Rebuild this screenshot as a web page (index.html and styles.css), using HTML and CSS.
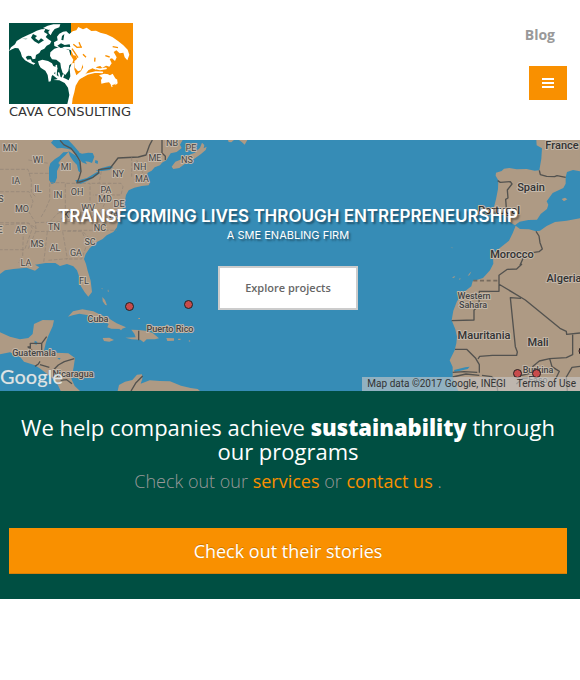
FILE: index.html
```html
<!DOCTYPE html>
<html lang="en">
<head>
<meta charset="utf-8">
<meta name="viewport" content="width=device-width, initial-scale=1">
<title>Cava Consulting</title>
<link rel="stylesheet" href="styles.css">
</head>
<body>
<header class="header">
  <a class="brand" href="#">
    <svg class="brand-mark" viewBox="27 24 372 243" preserveAspectRatio="none" aria-hidden="true">
      <path fill="#004f42" d="M27 24h186v243H27z"/>
      <path fill="#f99000" d="M213 24h186v243H213z"/>
      <g fill="#fff">
        <path d="M27 108L33 97 45 88 50 78 66 68 82 61 97 54 110 47 124 43 136 42 132 51 143 58 137 66 145 73 154 79 150 87 140 92 133 101 123 106 118 114 108 120 106 131 98 133 93 123 84 122 77 126 82 134 92 133 96 141 106 145 101 149 88 143 75 136 66 125 62 112 55 100 45 99 36 103z"/>
        <path d="M129 39L143 32 160 28 181 28 178 37 164 42 157 51 152 61 146 55 144 44z"/>
        <path d="M114 139L127 134 144 138 156 145 160 153 173 158 171 168 162 174 155 184 152 199 146 200 143 180 136 167 122 158 117 149z"/>
        <path d="M163 93L162 82 173 76 171 65 178 56 189 50 199 49 208 57 218 49 229 46 235 36 249 43 260 38 274 48 288 47 301 53 319 58 338 67 355 79 370 91 383 104 388 119 382 136 374 127 370 113 359 115 349 106 341 111 350 127 345 138 336 130 329 132 335 145 328 155 315 151 306 158 298 148 291 151 286 165 276 153 267 148 258 164 251 160 245 143 233 136 228 122 220 121 213 106 202 102 194 106 186 96 176 98z"/>
        <path d="M151 112L163 101 180 96 193 101 207 104 211 119 220 134 217 144 208 151 205 168 196 180 188 174 183 158 181 144 169 134 156 133 150 123z"/>
        <path d="M223 139L237 127 247 132 249 145 243 166 234 169 225 158zM292 146L310 143 320 151 308 158zM297 181L313 176 326 178 320 185 306 188zM303 195L310 184 322 178 330 181 338 176 344 187 350 195 345 208 334 211 327 202 316 203 304 206zM332 209L339 213 335 217zM347 196L351 191 353 205 346 211z"/>
        <path d="M202 267L208 240 204 218 194 204 178 196 160 195 173 192 157 179 146 165 151 162 165 178 178 185 194 190 206 196 211 184 209 160 216 145 224 144 223 163 229 181 243 168 252 153 262 145 276 149 299 143 319 139 322 145 300 153 281 158 265 166 252 183 237 195 227 212 223 232 218 250 216 267z"/>
      </g>
      <g fill="none" stroke="#fff" stroke-width="5" stroke-linecap="round" stroke-linejoin="round">
        <path d="M244 187L262 177 287 171 307 172M281 159L300 163 318 160M186 192L190 180M168 180L169 152M180 189L176 174M256 155L272 132 291 120"/>
      </g>
      <path fill="#004f42" d="M99 57L111 63 105 69 116 77 123 70 132 76 116 86 103 79 93 68zM139 45L150 44 144 50zM172 92L183 85 194 90 209 88 211 96 194 95 182 99zM186 63L193 57 190 76 184 75zM66 71L83 71 78 73z"/>
      <path fill="none" stroke="#f99000" stroke-width="4" d="M216 101L227 117 234 128M220 88L231 97 246 96M237 82L242 94M249 118L258 127M316 122L329 126M284 140L285 128M338 95L354 98"/>
    </svg>
    <span class="brand-name">CAVA CONSULTING</span>
  </a>
  <nav class="nav">
    <a class="nav-link" href="#">Blog</a>
    <button class="menu" type="button" aria-label="Menu">
      <svg width="12" height="10" viewBox="0 0 12 10" aria-hidden="true"><path fill="#fff" d="M0 0h12v2H0zM0 4h12v2H0zM0 8h12v2H0z"/></svg>
    </button>
  </nav>
</header>

<main>
  <section class="hero">
    <svg class="map" viewBox="0 0 580 251" preserveAspectRatio="xMidYMid slice" role="img" aria-label="Map of project locations">
      <!-- Land and borders are drawn on a grid of three units per map pixel -->
      <g transform="scale(.33333)">
        <g fill="#ae9a84">
          <path d="M0 0H548L540 14 545 24 530 36 512 40 499 61 486 68 480 76 464 82 455 92 443 98 439 112 442 123 450 127 446 136 425 138 403 143 386 151 378 165 374 187 367 209 359 225 350 219 349 235 354 246 351 262 340 276 320 286 308 297 285 309 269 325 257 342 252 357 258 372 263 392 272 422 276 456 265 470 254 457 242 437 240 417 231 391 220 379 201 372 180 378 166 369 137 369 105 374 118 382 105 392 80 383 40 387 15 391 0 402z"/>
          <path d="M515 80L526 65 545 58 572 43 585 38 600 23 606 8 613 15 611 25 620 20 617 30 603 42 582 57 557 70 538 84 520 87zM556 21L575 23 588 29 575 34 559 28zM684 0H702L694 7 686 6zM717 0H742L734 14 726 7z"/>
          <path d="M0 577L30 590 60 598 85 594 98 582 102 552 128 540 162 541 158 559 145 587 138 607 131 635 165 638 205 640 225 654 221 681 214 716 224 738 240 753H182L174 736 154 712 121 686 105 676 72 665 60 650 30 637 0 643z"/>
          <path d="M204 530L219 514 247 508 280 514 303 525 328 536 350 550 378 562 365 567 334 566 322 562 326 552 303 538 265 526 238 521 218 526zM308 594L328 593 342 600 328 605 312 603zM394 569L416 570 436 572 457 578 477 595 465 598 440 598 431 607 421 599 395 598 376 593 407 592 403 581zM499 594L522 595 522 602 502 603z"/>
          <path d="M307 471L315 480 321 496 316 495 308 484zM324 448L327 456 323 454zM303 445L309 446 307 448zM358 567L367 568 363 571zM415 534h5v3h-5zM535 596L542 596 541 600 534 600zM566 602L570 601 571 604 567 605z"/>
          <path d="M353 753L357 735 375 725 397 720 411 704 426 703 427 716 422 731 449 721 480 723 510 724 543 737 572 744 593 747 600 753z"/>
          <path d="M1740 0H1609L1610 16 1626 25 1624 56 1618 91 1604 92 1580 87 1550 88 1528 84 1512 86 1505 93 1488 98 1487 107 1495 121 1494 147 1488 178 1481 205 1483 217 1503 215 1520 225 1525 244 1545 256 1559 245 1585 240 1611 239 1622 222 1641 207 1645 194 1640 184 1658 159 1690 144 1697 131 1697 112 1701 96 1719 90 1740 94z"/>
          <path d="M1547 257L1560 267 1587 268 1608 274 1620 272 1640 258 1665 246 1700 242 1740 235V753H1375L1366 731 1358 712 1358 681 1349 661 1364 631 1369 610 1371 590 1366 568 1355 541 1360 512 1371 484 1391 457 1414 439 1418 424 1449 414 1470 391 1480 371 1479 349 1489 332 1510 316 1527 302 1538 280zM1685 177L1695 173 1702 178 1692 184zM1356 412L1366 408 1362 414zM1376 417L1382 415 1380 419zM1410 398L1414 395 1408 406 1403 407zM1351 322L1358 323 1358 325zM1479 654L1483 656 1481 659z"/>
        </g>
        <g fill="#368cb6">
          <path d="M153 8L160 0H205L222 18 238 37 232 45 218 31 201 26 186 24 171 25 162 17zM147 83L151 70 164 58 178 49 190 37 205 36 196 46 184 57 175 69 180 75 171 93 171 113 165 128 155 132 147 120zM205 33L224 45 237 59 243 76 242 99 235 93 231 75 219 62 210 49zM225 33L246 41 265 38 278 39 283 50 276 69 266 65 256 64 261 73 246 67 238 56 227 49zM286 60L294 63 293 72 285 68zM226 120L239 120 261 114 295 94 300 100 274 117 242 132 231 131zM287 93L305 84 330 77 339 81 329 90 305 93z"/>
          <path d="M104 602L112 606 110 614 103 612zM172 654H182L178 659zM213 706L222 717 219 722zM1362 690L1396 682 1409 680 1403 687 1364 696zM341 219L346 232 340 239 338 225zM328 205L334 229 328 233 324 217z"/>
        </g>
        <g fill="none" stroke="#53524f" stroke-width="4" stroke-linejoin="round">
          <path d="M180 1L191 14 213 25 229 45 240 63 243 94 237 114 231 129 253 122 279 112 296 98 296 89 331 84 354 54 415 51 438 45 448 17 457 0M486 0V39L496 49 496 60M91 632V610H125V640M91 620L84 621 102 636M125 610L140 590M120 664L115 672 105 679M120 674L148 682M160 690L175 675 193 665 223 656M182 721L200 719 216 731M416 572V601M428 708L408 728 393 753"/>
          <path d="M1618 91L1621 104 1640 109 1664 110 1671 107 1697 112M1493 122L1501 127 1531 125 1536 132 1522 150 1524 174 1517 178 1519 204M1608 274L1617 288 1620 308 1627 327 1617 335 1583 340 1570 353 1560 376M1566 372L1550 387 1522 388 1497 406V454H1438L1437 496 1422 511 1422 540 1355 542M1496 432L1576 480 1680 565 1699 574 1700 583 1740 579M1563 475L1531 473 1546 620 1552 636 1550 646 1477 646 1439 649 1434 657M1365 628L1400 628 1427 655 1438 674 1438 698M1718 584L1718 644 1699 653 1649 656 1618 663 1599 679 1590 700 1562 707M1358 697L1392 695 1432 697M1358 711L1398 702 1438 706M1446 706L1475 710 1490 726 1493 753M1649 656L1656 680 1678 694 1668 715M1740 679L1716 682 1699 711 1702 753M1549 732L1569 715 1604 713 1639 723"/>
        </g>
        <path fill="none" stroke="#776b5e" stroke-width="5" stroke-dasharray="12 8" d="M1420 422H1497"/>
        <g fill="none" stroke="#918477" stroke-width="2" stroke-dasharray="11 5">
          <path d="M0 88H84L94 122V157L108 171M0 155H87L99 184 93 205M0 248H80L110 265M87 100H146M149 130V179L136 209 121 235M0 255L87 249 97 265 74 329H0M78 200L94 228 107 248 107 275 85 326M151 128H196V208L171 222 151 244M199 130H270V186L250 216 213 221 179 239M275 130H363L369 140 363 165H279M304 94L297 130M395 52V110M410 60L432 106M402 118H440M106 248L215 244 325 239M107 275L242 271H350M142 275L131 368M188 275L202 356 143 361M202 274H246L261 312 245 357H199M250 276L285 313M284 192L316 187 324 173M320 176L307 206 273 234M70 273L68 348 56 368M85 60L145 70"/>
        </g>
      </g>
      <g class="label label-state">
        <text x="10" y="11">MN</text><text x="38" y="23">WI</text><text x="66" y="30">MI</text><text x="118" y="37">NY</text>
        <text x="155" y="21">ME</text><text x="140" y="30">NH</text><text x="142" y="42">MA</text><text x="172" y="6">NB</text>
        <text x="191" y="11">PE</text><text x="187" y="23">NS</text><text x="16" y="44">IA</text><text x="38" y="52">IL</text>
        <text x="58" y="58">IN</text><text x="77" y="55">OH</text><text x="106" y="53">PA</text><text x="105" y="62">MD</text>
        <text x="119" y="67">DE</text><text x="88" y="71">WV</text><text x="69" y="78">KY</text><text x="113" y="78">VA</text><text x="22" y="72">MO</text><text x="1" y="62">S</text>
        <text x="0" y="93">E</text><text x="21" y="93">AR</text><text x="54" y="90">TN</text><text x="100" y="91">NC</text><text x="90" y="105">SC</text>
        <text x="37" y="107">MS</text><text x="55" y="111">AL</text><text x="76" y="116">GA</text><text x="26" y="126">LA</text><text x="84" y="144">FL</text>
      </g>
      <g class="label label-place">
        <text x="98" y="182">Cuba</text><text x="170" y="192">Puerto Rico</text><text x="34" y="216">Guatemala</text><text x="73" y="237">Nicaragua</text>
        <text x="474" y="159">Western</text><text x="473" y="168">Sahara</text><text x="538" y="233">Burkina</text><text x="538" y="243">Faso</text>
      </g>
      <g class="label label-country">
        <text x="562" y="9">France</text><text x="531" y="51">Spain</text><text x="499" y="74">Portugal</text><text x="512" y="118">Morocco</text>
        <text x="564" y="142">Algeria</text><text x="484" y="199">Mauritania</text><text x="538" y="206">Mali</text>
      </g>
      <g fill="#c84b4b" stroke="#222" stroke-width="1">
        <circle cx="129.500" cy="166.500" r="4"/><circle cx="188.500" cy="164.500" r="4"/><circle cx="517.500" cy="233.500" r="4"/><circle cx="536.500" cy="233.500" r="4"/><circle cx="583" cy="211" r="4"/>
      </g>
      <text class="map-logo" x="0" y="244">Google</text>
    </svg>
    <div class="hero-content">
      <h1 class="hero-title">TRANSFORMING LIVES THROUGH ENTREPRENEURSHIP</h1>
      <p class="hero-subtitle">A SME ENABLING FIRM</p>
      <a class="hero-button" href="#">Explore projects</a>
    </div>
    <div class="attribution"><span>Map data ©2017 Google, INEGI</span><a href="#">Terms of Use</a></div>
  </section>

  <section class="promo">
    <h2 class="promo-title">We help companies achieve <strong>sustainability</strong> through our programs</h2>
    <p class="promo-text">Check out our <a href="#">services</a> or <a href="#">contact us</a> .</p>
    <a class="promo-button" href="#">Check out their stories</a>
  </section>
</main>
</body>
</html>
```
FILE: styles.css
```css
* {
  box-sizing: border-box;
}

body {
  margin: 0;
  background: #fff;
  font-family: "Open Sans", "Liberation Sans", sans-serif;
}

a {
  text-decoration: none;
}

h1, h2, p {
  margin: 0;
}

.header {
  display: flex;
  justify-content: space-between;
  align-items: flex-start;
  min-height: 140px;
  padding: 23px 13px 20px 9px;
}

.brand {
  display: flex;
  flex-direction: column;
  width: 124px;
  color: #333;
}

.brand-mark {
  display: block;
  width: 124px;
  height: 81px;
}

.brand-name {
  font: 400 13px/16px "DejaVu Sans", sans-serif;
  white-space: nowrap;
}

.nav {
  display: flex;
  flex-direction: column;
  align-items: flex-end;
  gap: 19px;
}

.nav-link {
  padding-right: 12px;
  color: #999;
  font-size: 14px;
  font-weight: 700;
  line-height: 24px;
}

.menu {
  display: flex;
  align-items: center;
  justify-content: center;
  width: 38px;
  height: 34px;
  padding: 0;
  border: 0;
  background: #f99000;
}

.hero {
  position: relative;
  height: 251px;
  overflow: hidden;
  background: #368cb6;
}

.map {
  position: absolute;
  inset: 0;
  width: 100%;
  height: 100%;
}

.label {
  fill: #444;
  stroke: #c4b8aa;
  stroke-width: 2px;
  stroke-linejoin: round;
  paint-order: stroke;
  font-family: Roboto, sans-serif;
  text-anchor: middle;
}

.label-state {
  font-size: 9px;
}

.label-place {
  font-size: 9px;
  font-weight: 500;
}

.label-country {
  fill: #333;
  font-size: 11px;
  font-weight: 500;
}

.map-logo {
  fill: #dce3e5;
  stroke: #8493994d;
  stroke-width: 1px;
  paint-order: stroke;
  font: 500 20px Lato, sans-serif;
}

.hero-content {
  position: relative;
  display: flex;
  flex-direction: column;
  align-items: center;
  padding: 65px 13px 0 9px;
  color: #fff;
  text-align: center;
  text-shadow: 2px 2px 2px #0006;
}

.hero-title {
  font: 600 17px/22px Inter, sans-serif;
}

.hero-subtitle {
  margin-bottom: 22px;
  font: 400 11px/17px Inter, sans-serif;
}

.hero-button {
  width: 140px;
  border: 2px solid #ccc;
  background: #fff;
  color: #666;
  font-size: 11px;
  font-weight: 600;
  line-height: 40px;
  text-shadow: none;
}

.attribution {
  position: absolute;
  right: 0;
  bottom: 0;
  display: flex;
  gap: 11px;
  padding: 0 4px 0 5px;
  background: #c8c8c8a0;
  color: #333;
  font: 400 10px/14px Roboto, sans-serif;
}

.attribution a {
  color: inherit;
}

.promo {
  padding: 24px 13px 25px 9px;
  background: #004f42;
  text-align: center;
}

.promo-title {
  color: #fff;
  font-size: 22px;
  font-weight: 400;
  line-height: 24px;
}

.promo-title strong {
  font-weight: 800;
}

.promo-text {
  padding: 6px 0 3px;
  margin-bottom: 31px;
  color: #999;
  font-size: 18px;
  font-weight: 300;
  line-height: 25px;
}

.promo-text a {
  color: #f99000;
  font-weight: 400;
}

.promo-button {
  display: block;
  padding-top: 1px;
  border-bottom: 1px solid #d87f08;
  background: #f99000;
  color: #fff;
  font-size: 18px;
  font-weight: 500;
  line-height: 44px;
  text-shadow: 0 -1px 0 #0003;
}
```
